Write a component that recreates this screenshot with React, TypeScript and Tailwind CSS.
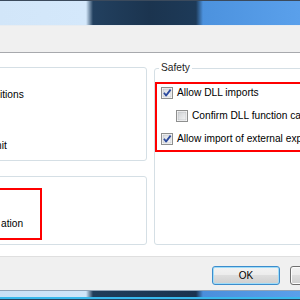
import React from "react";

function CheckBox({ checked }: { checked: boolean }) {
  return (
    <svg width="12" height="12" viewBox="0 0 12 12" className="shrink-0">
      <defs>
        <linearGradient id={checked ? "cbOn" : "cbOff"} x1="0" y1="0" x2="1" y2="1">
          <stop offset="0" stopColor={checked ? "#d8dbe0" : "#cfd1d4"} />
          <stop offset="1" stopColor={checked ? "#f8f9fb" : "#f3f4f5"} />
        </linearGradient>
      </defs>
      <rect x="0.5" y="0.5" width="11" height="11" fill="#fff" stroke="#8e8f8f" />
      <rect x="2" y="2" width="8" height="8" fill={`url(#${checked ? "cbOn" : "cbOff"})`} stroke="#b9bbbe" strokeWidth="0.6" />
      {checked && (
        <path d="M3 5.8 L5 8.6 L9.6 2.6" fill="none" stroke="#2c4a9e" strokeWidth="1.8" strokeLinejoin="round" />
      )}
    </svg>
  );
}

function Option({ label, checked, indent }: { label: string; checked: boolean; indent?: boolean }) {
  return (
    <div className={`flex items-center gap-[4px] h-[12px] whitespace-nowrap ${indent ? "pl-[19px]" : "pl-[4px]"}`}>
      <CheckBox checked={checked} />
      <span>{label}</span>
    </div>
  );
}

export default function App() {
  return (
    <div className="w-[300px] h-[300px] overflow-hidden flex flex-col bg-white text-black text-[10.2px] leading-[12px] font-['Liberation_Sans',Arial,sans-serif]">
      {/* title bar */}
      <div className="h-[25px] shrink-0 border-t border-[#3b4a5c] bg-[linear-gradient(to_right,#d2e6f9_0px,#d4e8fb_86px,#22405f_93px,#1b344f_150px,#1d3a58_196px,#4c92de_203px,#5aa0eb_300px)]" />
      {/* toolbar strip */}
      <div className="h-[28px] shrink-0 bg-[#f0f0f0] border-t border-[#e8ecf0] border-b border-b-[#a7a9ad]" />
      {/* content */}
      <div className="h-[203px] shrink-0 flex gap-[7px] bg-white">
        <div className="-ml-[10px] w-[157px] shrink-0 pt-[14px] flex flex-col gap-[15px]">
          <div className="h-[94px] border border-[#d5dfe5] rounded-[3px] pl-[9px] pt-[21px] flex flex-col">
            <span className="whitespace-nowrap">itions</span>
            <span className="whitespace-nowrap mt-[39px] -ml-[4px]">nit</span>
          </div>
          <div className="h-[69px] border border-[#d5dfe5] rounded-[3px] pt-[11px]">
            <div className="w-[51px] h-[52px] border-2 border-[#ff0000] pt-[28px] pl-[8px]">
              <span className="whitespace-nowrap">ation</span>
            </div>
          </div>
        </div>
        <div className="w-[170px] shrink-0 pt-[9px]">
          <fieldset className="h-[183px] border border-[#d5dfe5] rounded-[3px]">
            <legend className="ml-[4px] px-[2px] text-[#1e1e1e]">Safety</legend>
            <div className="mt-[8px] h-[70px] border-2 border-[#ff0000] pt-[3px] flex flex-col gap-[11px]">
              <Option label="Allow DLL imports" checked />
              <Option label="Confirm DLL function calls" checked={false} indent />
              <Option label="Allow import of external expressions" checked />
            </div>
          </fieldset>
        </div>
      </div>
      {/* button bar */}
      <div className="h-[34px] shrink-0 bg-[#f0f0f0] border-t border-[#dfdfdf] flex gap-[10px] pl-[212px] pt-[9px]">
        <button className="w-[68px] h-[19px] shrink-0 rounded-[3px] border border-[#3c8ccc] shadow-[inset_0_0_0_1px_#9fdcf8] bg-[linear-gradient(to_bottom,#f3f3f3_0%,#ebebeb_50%,#dddddd_50%,#cfcfcf_100%)] text-[10px] leading-[12px] text-black">
          OK
        </button>
        <button className="w-[68px] h-[19px] shrink-0 rounded-[3px] border border-[#707070] shadow-[inset_0_0_0_1px_#fcfcfc] bg-[linear-gradient(to_bottom,#f2f2f2_0%,#ebebeb_50%,#dddddd_50%,#cfcfcf_100%)] text-[10px] leading-[12px] text-black">
          Cancel
        </button>
      </div>
      {/* window frame bottom */}
      <div className="h-[10px] shrink-0 flex flex-col border-t border-[#8fa2b6] bg-[linear-gradient(to_right,#c9e0f5_0px,#cfe5f9_86px,#1f3d5a_93px,#1a3350_196px,#4a8fdc_203px,#5aa0eb_300px)]">
        <div className="flex-1" />
        <div className="h-[2px] bg-[#38b8ec]" />
        <div className="h-[1px] bg-[#27425e]" />
      </div>
    </div>
  );
}
